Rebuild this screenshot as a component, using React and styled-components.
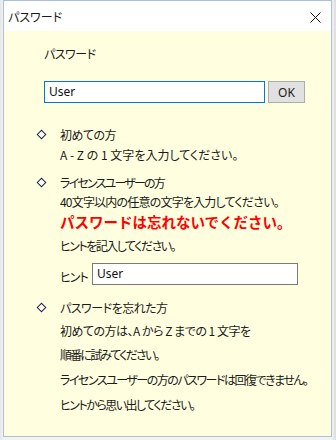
import styled, { createGlobalStyle } from "styled-components";

const Global = createGlobalStyle`
  html, body {
    margin: 0;
    padding: 0;
    background: #ececec;
  }
  body {
    font-family: "Noto Sans CJK JP", "Noto Sans", sans-serif;
    font-size: 12px;
    color: #1a1a1a;
  }
`;

const Page = styled.div`
  width: 336px;
  height: 440px;
  box-sizing: border-box;
  padding: 0 4px 3px 3px;
  background: linear-gradient(90deg, #e6e6e6, #f2f2f2 3px, #f2f2f2 calc(100% - 4px), #dcdcdc);
`;

const Window = styled.div`
  height: 100%;
  box-sizing: border-box;
  border: 1px solid #a9c0d8;
  display: flex;
  flex-direction: column;
  background: #ffffe0;
`;

const TitleBar = styled.div`
  height: 30px;
  flex: none;
  background: #fff;
  display: flex;
  align-items: center;
  justify-content: space-between;
  padding: 0 10px 0 4px;
  font-size: 12px;
  font-feature-settings: "palt";
`;

const Close = styled.svg`
  width: 11px;
  height: 11px;
  margin-top: 3px;
`;

const Body = styled.div`
  flex: 1;
  padding: 13px 0 0 40px;
  font-feature-settings: "palt";
  letter-spacing: -0.5px;
`;

const Line = styled.div`
  height: 20px;
  line-height: 20px;
  white-space: nowrap;
  margin-top: ${(p) => p.$mt ?? 0}px;
  padding-left: ${(p) => (p.$indent ? 16 : 0)}px;
  letter-spacing: ${(p) => p.$ls ?? -0.5}px;
`;

const Warn = styled(Line)`
  color: #ff0000;
  font-weight: bold;
  font-size: 14.5px;
  letter-spacing: 0;
  font-feature-settings: normal;
`;

const Row = styled.div`
  display: flex;
  align-items: center;
  gap: ${(p) => p.$gap ?? 4}px;
  margin-top: ${(p) => p.$mt ?? 0}px;
  padding-left: ${(p) => p.$pl ?? 0}px;
`;

const TextBox = styled.div`
  width: ${(p) => p.$w}px;
  height: 22px;
  box-sizing: border-box;
  border: 1px solid ${(p) => (p.$focus ? "#0078d7" : "#7a7a7a")};
  background: #fff;
  font-family: "Noto Sans", sans-serif;
  font-size: 12px;
  letter-spacing: 0;
  line-height: 19px;
  padding-left: 4px;
  color: #111;
`;

const Button = styled.div`
  width: 37px;
  height: 22px;
  box-sizing: border-box;
  border: 1px solid #adadad;
  background: #e1e1e1;
  display: flex;
  align-items: center;
  justify-content: center;
  font-family: "Noto Sans", sans-serif;
  font-size: 12px;
  letter-spacing: 0;
`;

const Heading = styled.div`
  display: flex;
  align-items: center;
  height: 20px;
  margin-top: ${(p) => p.$mt ?? 0}px;
  margin-left: -6px;
  gap: 15px;
  letter-spacing: ${(p) => p.$ls ?? -0.5}px;
`;

const Diamond = styled.span`
  width: 5px;
  height: 5px;
  border: 1px solid #1c1c5c;
  transform: rotate(45deg);
`;

const HintLabel = styled.span`
  padding-top: 5px;
  width: 32px;
  letter-spacing: -1px;
`;

function Section({ title, mt, ls }) {
  return (
    <Heading $mt={mt} $ls={ls}>
      <Diamond />
      <span>{title}</span>
    </Heading>
  );
}

export default function App() {
  return (
    <>
      <Global />
      <Page>
        <Window>
          <TitleBar>
            <span>パスワード</span>
            <Close viewBox="0 0 11 11">
              <path d="M0.5 0.5 L10.5 10.5 M10.5 0.5 L0.5 10.5" stroke="#111" strokeWidth="1" />
            </Close>
          </TitleBar>
          <Body>
            <Line>パスワード</Line>
            <Row $mt={17} $gap={3}>
              <TextBox $w={221} $focus>User</TextBox>
              <Button>OK</Button>
            </Row>
            <Section title="初めての方" mt={21} />
            <Line $indent $mt={1} $ls={0}>A - Z の 1 文字を入力してください。</Line>
            <Section title="ライセンスユーザーの方" mt={7} ls={-1.8} />
            <Line $indent $ls={-0.8}>40文字以内の任意の文字を入力してください。</Line>
            <Warn $indent>パスワードは忘れないでください。</Warn>
            <Line $indent $mt={4} $ls={-1.5}>ヒントを記入してください。</Line>
            <Row $mt={7} $pl={16} $gap={0}>
              <HintLabel>ヒント</HintLabel>
              <TextBox $w={206}>User</TextBox>
            </Row>
            <Section title="パスワードを忘れた方" mt={12} />
            <Line $indent $mt={4}>初めての方は、A から Z までの 1 文字を</Line>
            <Line $indent $mt={4} $ls={-1.8}>順番に試みてください。</Line>
            <Line $indent $mt={5} $ls={-1.5}>ライセンスユーザーの方のパスワードは回復できません。</Line>
            <Line $indent $mt={5} $ls={-1.5}>ヒントから思い出してください。</Line>
          </Body>
        </Window>
      </Page>
    </>
  );
}
